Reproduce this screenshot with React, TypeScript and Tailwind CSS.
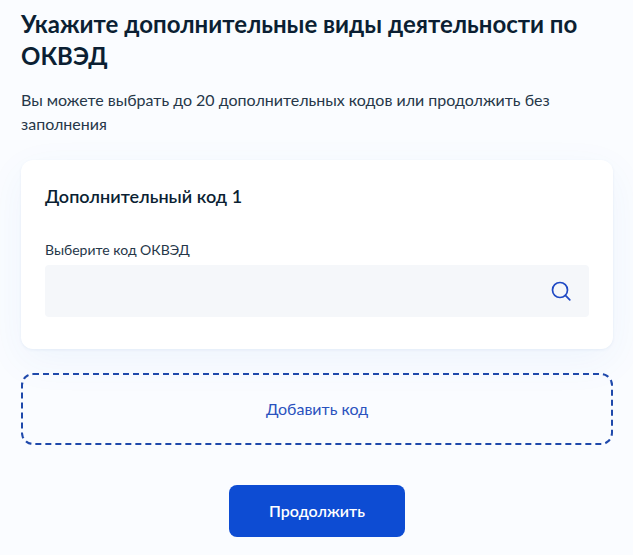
import { useState } from "react";

export default function App() {
  const [code, setCode] = useState("");

  return (
    <main className="min-h-screen bg-[#fafcff] pt-2 pr-5 pb-4 pl-[21px] font-['Lato',sans-serif] text-[#0b1f33]">
      <h1 className="text-2xl leading-8 font-bold">
        Укажите дополнительные виды деятельности по ОКВЭД
      </h1>
      <p className="mt-4 text-base leading-6 text-[#263749]">
        Вы можете выбрать до 20 дополнительных кодов или продолжить без
        заполнения
      </p>

      <form onSubmit={(e) => e.preventDefault()}>
        <section className="mt-6 rounded-xl bg-white px-6 pt-6 pb-8 shadow-[0_1px_3px_rgba(54,100,170,0.08),0_12px_40px_rgba(54,120,220,0.06)]">
          <h2 className="text-lg leading-6 font-semibold">
            Дополнительный код 1
          </h2>
          <label
            htmlFor="okved"
            className="mt-8 block text-sm leading-5 text-[#263749]"
          >
            Выберите код ОКВЭД
          </label>
          <div className="mt-[5px] flex items-center rounded bg-[#f5f7fa] pr-4">
            <input
              id="okved"
              type="text"
              value={code}
              onChange={(e) => setCode(e.target.value)}
              className="h-13 min-w-0 flex-1 bg-transparent px-4 text-base outline-none"
            />
            <button type="button" aria-label="Найти">
              <svg
                className="size-6"
                viewBox="0 0 24 24"
                fill="none"
                stroke="#1f49c4"
                strokeWidth="1.7"
                strokeLinecap="round"
              >
                <circle cx="11" cy="11" r="7.5" />
                <path d="M16.4 16.4L20.8 20.8" />
              </svg>
            </button>
          </div>
        </section>

        <button
          type="button"
          className="mt-6 h-18 w-full rounded-xl border-2 border-dashed border-[#1f49ab] text-base text-[#2a52be]"
        >
          Добавить код
        </button>

        <div className="mt-10 flex justify-center">
          <button
            type="submit"
            className="h-13 rounded-lg bg-[#0d4cd3] px-10 text-base font-semibold text-white"
          >
            Продолжить
          </button>
        </div>
      </form>
    </main>
  );
}
